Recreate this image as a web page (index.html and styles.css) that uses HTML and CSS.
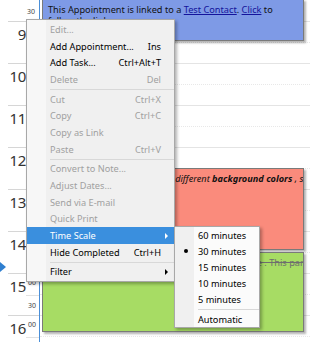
FILE: index.html
```html
<!DOCTYPE html>
<html lang="en">
<head>
    <meta charset="UTF-8">
    <title>Scheduler</title>
    <link rel="stylesheet" href="styles.css">
</head>
<body>
<div class="scheduler">
    <div class="ruler">
        <div class="ruler-top"><span class="mins">30</span></div>
        <div class="hour"><span class="num">9</span><span class="mins">00</span><span class="mins half">30</span></div>
        <div class="hour"><span class="num">10</span><span class="mins">00</span><span class="mins half">30</span></div>
        <div class="hour"><span class="num">11</span><span class="mins">00</span><span class="mins half">30</span></div>
        <div class="hour"><span class="num">12</span><span class="mins">00</span><span class="mins half">30</span></div>
        <div class="hour"><span class="num">13</span><span class="mins">00</span><span class="mins half">30</span></div>
        <div class="hour"><span class="num">14</span><span class="mins">00</span><span class="mins half">30</span></div>
        <div class="hour"><span class="num">15</span><span class="mins">00</span><span class="mins half">30</span></div>
        <div class="hour"><span class="num">16</span><span class="mins">00</span><span class="mins half">30</span></div>
        <div class="now-marker"></div>
    </div>
    <div class="day">
        <div class="slot top"></div>
        <div class="slot"></div><div class="slot half"></div>
        <div class="slot"></div><div class="slot half"></div>
        <div class="slot"></div><div class="slot half"></div>
        <div class="slot"></div><div class="slot half"></div>
        <div class="slot"></div><div class="slot half"></div>
        <div class="slot"></div><div class="slot half"></div>
        <div class="slot"></div><div class="slot half"></div>
        <div class="slot"></div><div class="slot half"></div>

        <div class="appt appt-blue">
            This Appointment is linked to a <a href="#">Test Contact</a>. <a href="#">Click</a> to follow the link.
        </div>
        <div class="appt appt-red">
            <i>Appointments can be shown in different <b>background colors</b> , see the labels list.</i>
        </div>
        <div class="appt appt-green">
            <span class="done">These appointments have been marked complete . This part is struck out.</span>
        </div>
    </div>

    <div class="menu">
        <div class="item disabled"><span>Edit...</span></div>
        <div class="item"><span>Add Appointment...</span><span class="key">Ins</span></div>
        <div class="item"><span>Add Task...</span><span class="key">Ctrl+Alt+T</span></div>
        <div class="item disabled"><span>Delete</span><span class="key">Del</span></div>
        <div class="sep"></div>
        <div class="item disabled"><span>Cut</span><span class="key">Ctrl+X</span></div>
        <div class="item disabled"><span>Copy</span><span class="key">Ctrl+C</span></div>
        <div class="item disabled"><span>Copy as Link</span></div>
        <div class="item disabled"><span>Paste</span><span class="key">Ctrl+V</span></div>
        <div class="sep"></div>
        <div class="item disabled"><span>Convert to Note...</span></div>
        <div class="item disabled"><span>Adjust Dates...</span></div>
        <div class="item disabled"><span>Send via E-mail</span></div>
        <div class="item disabled"><span>Quick Print</span></div>
        <div class="item active sub"><span>Time Scale</span></div>
        <div class="item"><span>Hide Completed</span><span class="key">Ctrl+H</span></div>
        <div class="sep"></div>
        <div class="item sub"><span>Filter</span></div>
    </div>

    <div class="menu submenu">
        <div class="item"><span>60 minutes</span></div>
        <div class="item checked"><span>30 minutes</span></div>
        <div class="item"><span>15 minutes</span></div>
        <div class="item"><span>10 minutes</span></div>
        <div class="item"><span>5 minutes</span></div>
        <div class="sep"></div>
        <div class="item"><span>Automatic</span></div>
    </div>
</div>
</body>
</html>
```

FILE: styles.css
```css
html, body {
    margin: 0;
    padding: 0;
    background: #ffffff;
}

.scheduler {
    position: relative;
    display: flex;
    width: 310px;
    height: 342px;
    overflow: hidden;
    font-family: "Noto Sans", "Open Sans", sans-serif;
}

/* time ruler */
.ruler {
    position: relative;
    width: 40px;
    padding-left: 8px;
    box-sizing: border-box;
    border-right: 1px solid #4a8fd8;
    color: #333333;
}

.ruler-top {
    height: 21px;
    display: flex;
    justify-content: flex-end;
    align-items: flex-end;
    padding-right: 4px;
}

.hour {
    display: grid;
    grid-template-columns: 18px 1fr;
    grid-template-rows: 21px 21px;
    height: 42px;
    border-top: 1px solid #d6d6d6;
    box-sizing: border-box;
}

.num {
    grid-row: 1 / 3;
    grid-column: 1;
    font-size: 15px;
    line-height: 15px;
    text-align: right;
    padding-top: 5px;
    letter-spacing: -0.3px;
}

.mins {
    font-size: 7px;
    line-height: 7px;
    padding: 5px 0 0 2px;
    color: #444444;
}

.ruler-top .mins {
    padding: 0 0 6px 0;
}

.mins.half {
    grid-row: 2;
    grid-column: 2;
    border-top: 1px solid #e2e2e2;
    padding-top: 6px;
}

.now-marker {
    position: absolute;
    left: 0;
    top: 262px;
    width: 0;
    height: 0;
    border-top: 5px solid transparent;
    border-bottom: 5px solid transparent;
    border-left: 6px solid #2f7fd0;
}

/* day column */
.day {
    position: relative;
    flex: 1;
}

.slot {
    height: 21px;
    box-sizing: border-box;
    border-top: 1px solid #e4e4e4;
}

.slot.top {
    border-top: none;
}

.slot.half {
    border-top: 1px dotted #e8e8e8;
}

.appt {
    position: absolute;
    left: 2px;
    right: 6px;
    box-sizing: border-box;
    padding: 4px 5px;
    font-size: 9.2px;
    line-height: 11px;
    border: 1px solid #7a7a7a;
    box-shadow: 2px 2px 2px rgba(0, 0, 0, 0.3);
    color: #111111;
    overflow: hidden;
}

.appt-blue {
    top: -1px;
    height: 42px;
    background: #7e9ae6;
}

.appt-blue a {
    color: #14149c;
}

.appt-red {
    top: 168px;
    height: 82px;
    background: #fa8b7c;
    white-space: nowrap;
}

.appt-green {
    top: 252px;
    height: 80px;
    background: #a7dc64;
    white-space: nowrap;
}

.done {
    color: #6e6e6e;
    text-decoration: line-through;
}

/* context menu */
.menu {
    position: absolute;
    left: 26px;
    top: 19px;
    width: 149px;
    box-sizing: border-box;
    padding: 1px 0;
    background: #f0f0f0;
    border: 1px solid #a8a8a8;
    box-shadow: 2px 2px 3px rgba(0, 0, 0, 0.3);
    font-size: 9.2px;
    color: #000000;
}

.menu::before {
    content: "";
    position: absolute;
    left: 0;
    top: 0;
    bottom: 0;
    width: 19px;
    background: #f7f7f7;
}

.item {
    position: relative;
    display: flex;
    justify-content: space-between;
    align-items: center;
    height: 16.7px;
    padding: 0 13px 0 23px;
    white-space: nowrap;
}

.item.disabled {
    color: #a0a0a0;
}

.item.active {
    background: #3a8fde;
    color: #ffffff;
}

.item.sub::after {
    content: "";
    position: absolute;
    right: 6px;
    top: 50%;
    margin-top: -3px;
    border-top: 3px solid transparent;
    border-bottom: 3px solid transparent;
    border-left: 3px solid #000000;
}

.item.active.sub::after {
    border-left-color: #ffffff;
}

.sep {
    height: 1px;
    margin: 1px 0 1px 23px;
    background: #d8d8d8;
}

.submenu {
    left: 174px;
    top: 226px;
    width: 86px;
    padding: 0;
    background: #fbfbfb;
}

.submenu::before {
    background: #f0f0f0;
}

.submenu .item {
    height: 16.2px;
    padding-left: 23px;
}

.submenu .sep {
    margin-left: 23px;
}

.item.checked::before {
    content: "";
    position: absolute;
    left: 9px;
    top: 50%;
    width: 4px;
    height: 4px;
    margin-top: -2px;
    border-radius: 50%;
    background: #000000;
}
```
